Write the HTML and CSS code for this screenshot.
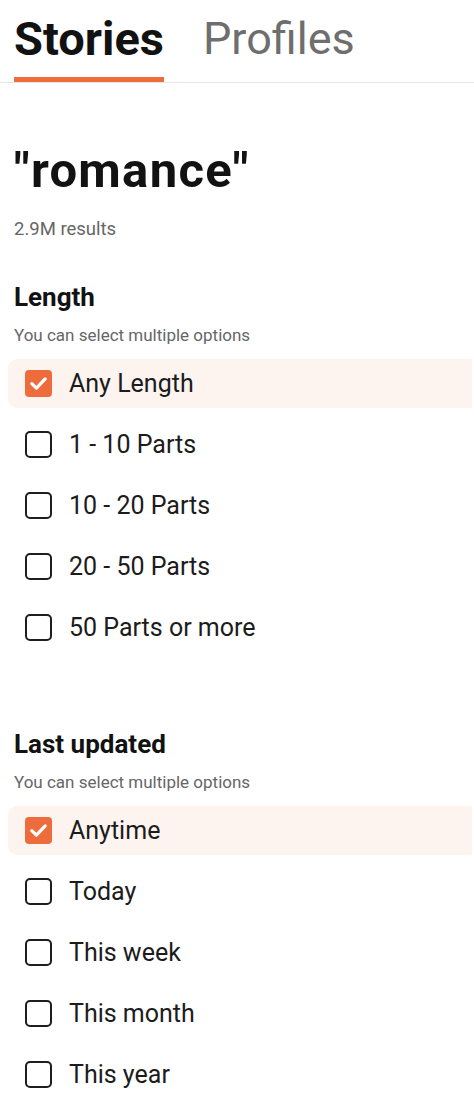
FILE: index.html
```html
<!DOCTYPE html>
<html>
<head>
<meta charset="utf-8">
<title>Search: romance</title>
<link rel="stylesheet" href="styles.css">
</head>
<body>
<nav class="tabs">
  <div class="tab tab-active">Stories</div>
  <div class="tab">Profiles</div>
</nav>
<main class="content">
  <h1 class="query">"romance"</h1>
  <p class="count">2.9M results</p>

  <section class="filter filter-first">
    <h2 class="filter-title">Length</h2>
    <p class="filter-hint">You can select multiple options</p>
    <ul class="options">
      <li class="option option-on"><span class="box box-on"><svg viewBox="0 0 27 27" width="27" height="27"><path d="M6.8 13.6 L11.4 18.2 L20.2 8.9" fill="none" stroke="#fff" stroke-width="3.2" stroke-linecap="round" stroke-linejoin="round"/></svg></span><span class="label">Any Length</span></li>
      <li class="option"><span class="box"></span><span class="label">1 - 10 Parts</span></li>
      <li class="option"><span class="box"></span><span class="label">10 - 20 Parts</span></li>
      <li class="option"><span class="box"></span><span class="label">20 - 50 Parts</span></li>
      <li class="option"><span class="box"></span><span class="label">50 Parts or more</span></li>
    </ul>
  </section>

  <section class="filter filter-second">
    <h2 class="filter-title">Last updated</h2>
    <p class="filter-hint">You can select multiple options</p>
    <ul class="options">
      <li class="option option-on"><span class="box box-on"><svg viewBox="0 0 27 27" width="27" height="27"><path d="M6.8 13.6 L11.4 18.2 L20.2 8.9" fill="none" stroke="#fff" stroke-width="3.2" stroke-linecap="round" stroke-linejoin="round"/></svg></span><span class="label">Anytime</span></li>
      <li class="option"><span class="box"></span><span class="label">Today</span></li>
      <li class="option"><span class="box"></span><span class="label">This week</span></li>
      <li class="option"><span class="box"></span><span class="label">This month</span></li>
      <li class="option"><span class="box"></span><span class="label">This year</span></li>
    </ul>
  </section>
</main>
</body>
</html>
```
FILE: styles.css
```css
* { box-sizing: border-box; }
html, body { margin: 0; padding: 0; background: #ffffff; }
body {
  font-family: Roboto, "Noto Sans", "Liberation Sans", sans-serif;
  color: #121212;
  width: 474px;
  overflow: hidden;
}

.tabs {
  display: flex;
  align-items: flex-end;
  gap: 39px;
  padding: 11px 0 0 14px;
  border-bottom: 1px solid #e6e6e6;
}
.tab {
  font-size: 45px;
  line-height: 56px;
  color: #6e6e6e;
  padding-bottom: 15px;
}
.tab-active {
  font-size: 47px;
  font-weight: 700;
  color: #121212;
  padding-bottom: 10px;
  border-bottom: 5px solid #ee6b3b;
}

.content { padding: 0 0 0 14px; }

.query {
  margin: 60px 0 0;
  font-size: 49px;
  line-height: 56px;
  font-weight: 700;
  letter-spacing: 1.3px;
}
.count {
  margin: 18px 0 0;
  font-size: 18.5px;
  line-height: 24px;
  color: #666666;
}

.filter-first { margin-top: 40px; }
.filter-second { margin-top: 76px; }
.filter-title {
  margin: 0;
  font-size: 26px;
  line-height: 32px;
  font-weight: 700;
}
.filter-hint {
  margin: 11px 0 0;
  font-size: 17px;
  line-height: 22px;
  color: #666666;
}

.options {
  list-style: none;
  margin: 13px 0 0 -6px;
  padding: 0;
  display: flex;
  flex-direction: column;
  gap: 12px;
}
.option {
  display: flex;
  align-items: center;
  gap: 17px;
  height: 49px;
  width: 464px;
  padding-left: 17px;
  border-radius: 9px 0 0 9px;
}
.option-on { background: #fdf4f0; }
.box {
  flex: none;
  width: 27px;
  height: 27px;
  border: 2px solid #1e1e1e;
  border-radius: 5px;
  margin-top: -1px;
}
.box-on {
  border: none;
  background: #ee6b3b;
  border-radius: 4px;
  display: block;
}
.box-on svg { display: block; }
.label {
  font-size: 25px;
  line-height: 30px;
  color: #1c1c1c;
}
```
